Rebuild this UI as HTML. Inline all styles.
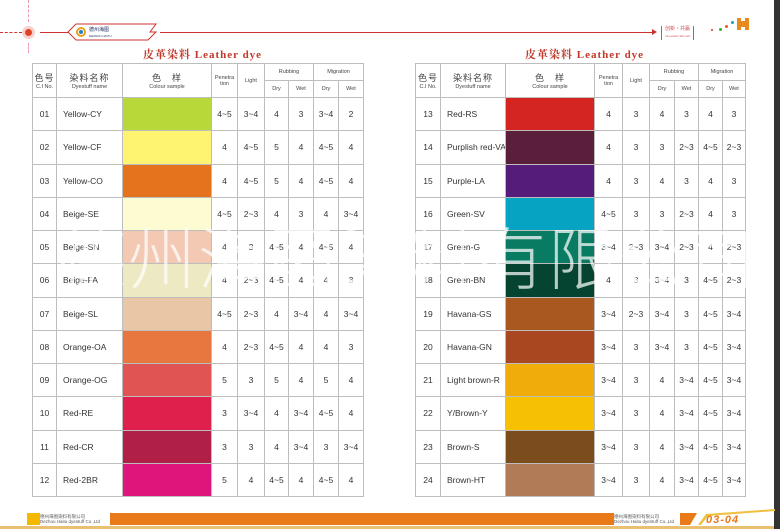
<!DOCTYPE html>
<html><head><meta charset="utf-8"><style>
*{margin:0;padding:0;box-sizing:border-box}
body{width:780px;height:529px;overflow:hidden;background:#fff;position:relative;font-family:"Liberation Sans","Noto Sans CJK SC",sans-serif;color:#333}
table{position:absolute;top:63px;border-collapse:collapse;table-layout:fixed}
td{border:1px solid #bdbdbd;text-align:center;font-size:8.5px;height:33.25px;padding:0;white-space:nowrap;overflow:hidden}
td.n{text-align:left;padding-left:6px}
tr.h td{height:17px;font-size:5.5px;color:#444}
.t1{font-size:9px;letter-spacing:1px}
.title{position:absolute;top:46px;font-family:"Noto Serif CJK SC","Liberation Serif",serif;font-weight:bold;color:#c0392b;font-size:11px;letter-spacing:1px}
.wm{position:absolute;left:58px;top:215px;font-family:"Noto Sans CJK SC",sans-serif;font-size:68px;font-weight:300;color:rgba(255,255,255,0.72);letter-spacing:2px;line-height:80px;white-space:nowrap}
.ft{position:absolute;top:513px;height:12px;background:#fff;font-size:4.5px;color:#555;line-height:5px;padding-top:1px;white-space:nowrap;overflow:hidden}
</style></head><body>
<div style="position:absolute;left:0;top:32px;width:22px;border-top:1px dashed #c33"></div>
<div style="position:absolute;left:28px;top:0;height:22px;border-left:1px dashed #e9a"></div>
<div style="position:absolute;left:28px;top:43px;height:10px;border-left:1px dashed #e9a"></div>
<div style="position:absolute;left:22px;top:26px;width:13px;height:13px;border-radius:50%;background:#f8d0d0"></div>
<div style="position:absolute;left:25px;top:29px;width:7px;height:7px;border-radius:50%;background:#d42"></div>
<div style="position:absolute;left:40px;top:32px;width:28px;border-top:1px solid #c33"></div>
<svg style="position:absolute;left:66px;top:22px" width="100" height="20"><path d="M2 10 L10 2 L90 2 L84 10 L90 10 L82 18 L10 18 Z" fill="#fff" stroke="#c33" stroke-width="1"/><circle cx="15" cy="10" r="4" fill="none" stroke="#e8a020" stroke-width="2"/><circle cx="15" cy="10" r="2" fill="#2a7fc1"/></svg>
<div style="position:absolute;left:89px;top:26px;font-size:5px;color:#236">德州海图<br><span style="font-size:3px">DEZHOU HAITU</span></div>
<div style="position:absolute;left:160px;top:32px;width:495px;border-top:1px solid #c33"></div>
<div style="position:absolute;left:652px;top:29px;width:0;height:0;border-left:5px solid #c33;border-top:3px solid transparent;border-bottom:3px solid transparent"></div>
<div style="position:absolute;left:661px;top:26px;font-size:5px;color:#c55;border-left:1px solid #c55;border-right:1px solid #c55;padding:0 3px;line-height:7px">创新・共赢<br><span style="font-size:3px">Innovation Win-win</span></div>
<div style="position:absolute;left:711px;top:29px;width:2px;height:2px;background:#c33;border-radius:50%"></div>
<div style="position:absolute;left:719px;top:28px;width:3px;height:3px;background:#3a3;border-radius:50%"></div>
<div style="position:absolute;left:725px;top:25px;width:3px;height:3px;background:#e52;border-radius:50%"></div>
<div style="position:absolute;left:731px;top:21px;width:3px;height:3px;background:#29c;border-radius:50%"></div>
<div style="position:absolute;left:737px;top:18px;width:12px;height:12px;background:#e88a20"></div>
<div style="position:absolute;left:741px;top:18px;width:4px;height:3px;background:#fff"></div>
<div style="position:absolute;left:741px;top:27px;width:4px;height:3px;background:#fff"></div>
<div style="position:absolute;left:774px;top:0;width:6px;height:529px;background:#333"></div>

<div class="title" style="left:143px">皮革染料 <span style="font-family:'Liberation Serif',serif">Leather dye</span></div>
<div class="title" style="left:525px">皮革染料 <span style="font-family:'Liberation Serif',serif">Leather dye</span></div>

<table style="left:32px;width:331px">
<colgroup><col style="width:24px"><col style="width:66px"><col style="width:89px"><col style="width:26px"><col style="width:27px"><col style="width:24px"><col style="width:25px"><col style="width:25px"><col style="width:25px"></colgroup>
<tr class="h"><td rowspan="2"><span class="t1">色号</span><br>C.I No.</td><td rowspan="2"><span class="t1">染料名称</span><br>Dyestuff name</td><td rowspan="2"><span class="t1">色　样</span><br>Colour sample</td><td rowspan="2">Penetra<br>tion</td><td rowspan="2">Light</td><td colspan="2">Rubbing</td><td colspan="2">Migration</td></tr>
<tr class="h"><td>Dry</td><td>Wet</td><td>Dry</td><td>Wet</td></tr>
<tr><td>01</td><td class="n">Yellow-CY</td><td style="background:#b8d738"></td><td>4~5</td><td>3~4</td><td>4</td><td>3</td><td>3~4</td><td>2</td></tr>
<tr><td>02</td><td class="n">Yellow-CF</td><td style="background:#fef471"></td><td>4</td><td>4~5</td><td>5</td><td>4</td><td>4~5</td><td>4</td></tr>
<tr><td>03</td><td class="n">Yellow-CO</td><td style="background:#e5731d"></td><td>4</td><td>4~5</td><td>5</td><td>4</td><td>4~5</td><td>4</td></tr>
<tr><td>04</td><td class="n">Beige-SE</td><td style="background:#fdfbd2"></td><td>4~5</td><td>2~3</td><td>4</td><td>3</td><td>4</td><td>3~4</td></tr>
<tr><td>05</td><td class="n">Beige-SN</td><td style="background:#f3c9b4"></td><td>4</td><td>3</td><td>4~5</td><td>4</td><td>4~5</td><td>4</td></tr>
<tr><td>06</td><td class="n">Beige-FA</td><td style="background:#ede9c3"></td><td>4</td><td>2~3</td><td>4~5</td><td>4</td><td>4</td><td>3</td></tr>
<tr><td>07</td><td class="n">Beige-SL</td><td style="background:#e9c6a6"></td><td>4~5</td><td>2~3</td><td>4</td><td>3~4</td><td>4</td><td>3~4</td></tr>
<tr><td>08</td><td class="n">Orange-OA</td><td style="background:#e8763f"></td><td>4</td><td>2~3</td><td>4~5</td><td>4</td><td>4</td><td>3</td></tr>
<tr><td>09</td><td class="n">Orange-OG</td><td style="background:#e05453"></td><td>5</td><td>3</td><td>5</td><td>4</td><td>5</td><td>4</td></tr>
<tr><td>10</td><td class="n">Red-RE</td><td style="background:#e0204c"></td><td>3</td><td>3~4</td><td>4</td><td>3~4</td><td>4~5</td><td>4</td></tr>
<tr><td>11</td><td class="n">Red-CR</td><td style="background:#b01f45"></td><td>3</td><td>3</td><td>4</td><td>3~4</td><td>3</td><td>3~4</td></tr>
<tr><td>12</td><td class="n">Red-2BR</td><td style="background:#df157c"></td><td>5</td><td>4</td><td>4~5</td><td>4</td><td>4~5</td><td>4</td></tr>
</table>

<table style="left:415px;width:330px">
<colgroup><col style="width:25px"><col style="width:65px"><col style="width:89px"><col style="width:28px"><col style="width:27px"><col style="width:25px"><col style="width:24px"><col style="width:24px"><col style="width:23px"></colgroup>
<tr class="h"><td rowspan="2"><span class="t1">色号</span><br>C.I No.</td><td rowspan="2"><span class="t1">染料名称</span><br>Dyestuff name</td><td rowspan="2"><span class="t1">色　样</span><br>Colour sample</td><td rowspan="2">Penetra<br>tion</td><td rowspan="2">Light</td><td colspan="2">Rubbing</td><td colspan="2">Migration</td></tr>
<tr class="h"><td>Dry</td><td>Wet</td><td>Dry</td><td>Wet</td></tr>
<tr><td>13</td><td class="n">Red-RS</td><td style="background:#d42522"></td><td>4</td><td>3</td><td>4</td><td>3</td><td>4</td><td>3</td></tr>
<tr><td>14</td><td class="n">Purplish red-VA</td><td style="background:#5b1e3b"></td><td>4</td><td>3</td><td>3</td><td>2~3</td><td>4~5</td><td>2~3</td></tr>
<tr><td>15</td><td class="n">Purple-LA</td><td style="background:#561c79"></td><td>4</td><td>3</td><td>4</td><td>3</td><td>4</td><td>3</td></tr>
<tr><td>16</td><td class="n">Green-SV</td><td style="background:#06a3c2"></td><td>4~5</td><td>3</td><td>3</td><td>2~3</td><td>4</td><td>3</td></tr>
<tr><td>17</td><td class="n">Green-G</td><td style="background:#0a7b63"></td><td>3~4</td><td>2~3</td><td>3~4</td><td>2~3</td><td>4</td><td>2~3</td></tr>
<tr><td>18</td><td class="n">Green-BN</td><td style="background:#044430"></td><td>4</td><td>3</td><td>3~4</td><td>3</td><td>4~5</td><td>2~3</td></tr>
<tr><td>19</td><td class="n">Havana-GS</td><td style="background:#a9581f"></td><td>3~4</td><td>2~3</td><td>3~4</td><td>3</td><td>4~5</td><td>3~4</td></tr>
<tr><td>20</td><td class="n">Havana-GN</td><td style="background:#a94820"></td><td>3~4</td><td>3</td><td>3~4</td><td>3</td><td>4~5</td><td>3~4</td></tr>
<tr><td>21</td><td class="n">Light brown-R</td><td style="background:#efac0a"></td><td>3~4</td><td>3</td><td>4</td><td>3~4</td><td>4~5</td><td>3~4</td></tr>
<tr><td>22</td><td class="n">Y/Brown-Y</td><td style="background:#f5c102"></td><td>3~4</td><td>3</td><td>4</td><td>3~4</td><td>4~5</td><td>3~4</td></tr>
<tr><td>23</td><td class="n">Brown-S</td><td style="background:#7c4d1c"></td><td>3~4</td><td>3</td><td>4</td><td>3~4</td><td>4~5</td><td>3~4</td></tr>
<tr><td>24</td><td class="n">Brown-HT</td><td style="background:#b07b56"></td><td>3~4</td><td>3</td><td>4</td><td>3~4</td><td>4~5</td><td>3~4</td></tr>
</table>

<div class="wm">德州海图染料有限公司</div>

<!-- footer -->
<div style="position:absolute;left:27px;top:513px;width:13px;height:12px;background:#f5b800"></div>
<div style="position:absolute;left:40px;top:513px;width:650px;height:12px;background:#e87a1a"></div>
<div class="ft" style="left:40px;width:70px">德州海图染料有限公司<br>Dezhou Haitu dyestuff Co.,Ltd</div>
<div class="ft" style="left:614px;width:68px">德州海图染料有限公司<br>Dezhou Haitu dyestuff Co.,Ltd</div>
<svg style="position:absolute;left:680px;top:505px" width="95" height="24"><polygon points="0,8 17,8 10,20 0,20" fill="#e87a1a"/><polygon points="18,20 26,9 95,4 95,6 28,11 21,20" fill="#f0c040"/></svg>
<div style="position:absolute;left:706px;top:514px;font-size:11px;font-style:italic;font-weight:bold;color:#e87a1a;letter-spacing:1px">03-04</div>
<div style="position:absolute;left:0;top:526px;width:774px;height:3px;background:#e9c070"></div>
</body></html>
